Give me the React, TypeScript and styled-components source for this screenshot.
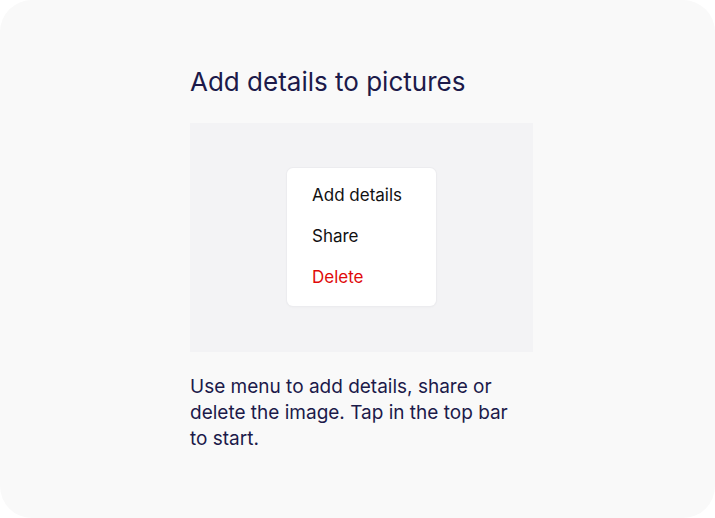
import React from "react";
import styled, { createGlobalStyle } from "styled-components";

const GlobalStyle = createGlobalStyle`
    html, body {
        margin: 0;
        padding: 0;
        background: #ffffff;
    }
    body {
        font-family: Inter, "Noto Sans", sans-serif;
    }
`;

interface MenuItemProps {
    $danger?: boolean
};

const menuItems = [
    { label: 'Add details' },
    { label: 'Share' },
    { label: 'Delete', danger: true },
];

const App: React.FC = () => {
    return (
        <>
            <GlobalStyle />
            <Card>
                <Content>
                    <Title>Add details to pictures</Title>
                    <Preview>
                        <Menu>
                            {menuItems.map((item) => (
                                <MenuItem key={item.label} $danger={item.danger}>{item.label}</MenuItem>
                            ))}
                        </Menu>
                    </Preview>
                    <Description>
                        Use menu to add details, share or delete the image. Tap in the top bar to start.
                    </Description>
                </Content>
            </Card>
        </>
    )
}

const Card = styled.div`
    width: 715px;
    height: 518px;
    box-sizing: border-box;
    background: #f9f9f9;
    border-radius: 32px;
    padding: 66px 0 0 190px;
`;

const Content = styled.div`
    width: 343px;
    display: flex;
    flex-direction: column;
`;

const Title = styled.h1`
    margin: 0;
    font-size: 26px;
    line-height: 32px;
    font-weight: 400;
    color: #1c1a4a;
`;

const Preview = styled.div`
    margin-top: 25px;
    height: 229px;
    background: #f3f3f5;
    display: flex;
    justify-content: center;
    align-items: center;
`;

const Menu = styled.ul`
    list-style: none;
    margin: 0 0 2px;
    padding: 7px 0 8px;
    width: 149px;
    box-sizing: border-box;
    background: #ffffff;
    border-radius: 6px;
    box-shadow: 0 0 0 1px #ececef, 0 1px 3px rgba(0, 0, 0, 0.04);
`;

const MenuItem = styled.li<MenuItemProps>`
    padding: 0 25px;
    height: 41px;
    display: flex;
    align-items: center;
    font-size: 17px;
    color: ${({ $danger }) => $danger ? '#e00a0a' : '#111111'};
`;

const Description = styled.p`
    margin: 22px 0 0;
    max-width: 330px;
    font-size: 19px;
    line-height: 26px;
    color: #1c1a4a;
`;

export default App;
